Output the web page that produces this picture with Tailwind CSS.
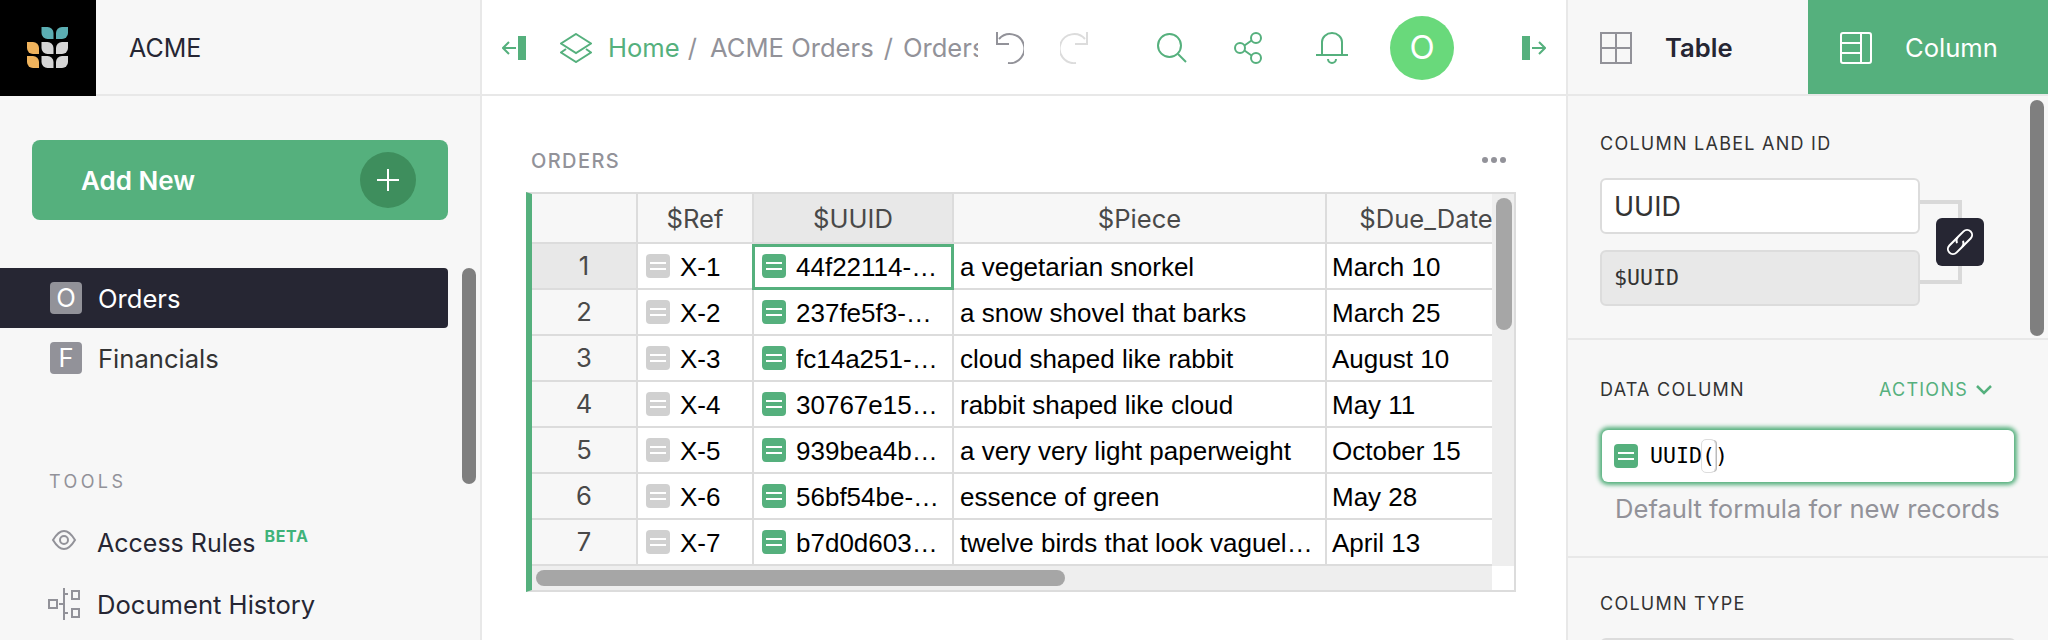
<!DOCTYPE html>
<html lang="en">
<head>
    <meta charset="UTF-8">
    <title>ACME Orders</title>
    <script src="https://cdn.jsdelivr.net/npm/@tailwindcss/browser@4"></script>
</head>
<body class="w-[2048px] h-[640px] overflow-hidden bg-white font-['Inter',sans-serif] text-[#262633]">

<svg class="hidden">
    <symbol id="eq" viewBox="0 0 24 24">
        <rect width="24" height="24" rx="4" fill="currentColor"/>
        <rect x="4" y="8" width="16" height="2" fill="#fff"/>
        <rect x="4" y="14" width="16" height="2" fill="#fff"/>
    </symbol>
</svg>

<div class="flex h-[640px]">

    <!-- left sidebar -->
    <aside class="relative w-[482px] shrink-0 bg-[#f7f7f7] border-r-2 border-[#e8e8e8] overflow-hidden">
        <div class="flex items-center h-[96px] border-b-2 border-[#e8e8e8]">
            <div class="flex items-center justify-center self-start w-[96px] h-[96px] bg-black shrink-0">
                <svg width="42" height="42" viewBox="0 0 42 42">
                    <path d="M14.500 0h6a6 6 0 0 1 6 6v6h-6a6 6 0 0 1-6-6z" fill="#5baeb3"/>
                    <path d="M41 0h-6a6 6 0 0 0-6 6v6h6a6 6 0 0 0 6-6z" fill="#5baeb3"/>
                    <path d="M0 15h6a6 6 0 0 1 6 6v6h-6a6 6 0 0 1-6-6z" fill="#f0b35c"/>
                    <path d="M0 29h6a6 6 0 0 1 6 6v6h-6a6 6 0 0 1-6-6z" fill="#f0b35c"/>
                    <path d="M14.500 15h6a6 6 0 0 1 6 6v6h-6a6 6 0 0 1-6-6z" fill="#d6d6d6"/>
                    <path d="M14.500 29h6a6 6 0 0 1 6 6v6h-6a6 6 0 0 1-6-6z" fill="#d6d6d6"/>
                    <path d="M41 15h-6a6 6 0 0 0-6 6v6h6a6 6 0 0 0 6-6z" fill="#d6d6d6"/>
                    <path d="M41 29h-6a6 6 0 0 0-6 6v6h6a6 6 0 0 0 6-6z" fill="#d6d6d6"/>
                </svg>
            </div>
            <span class="ml-[33px] mt-[4px] text-[25px]">ACME</span>
        </div>

        <div class="pt-[44px] pl-[32px]">
            <div class="flex items-center justify-between w-[416px] h-[80px] pl-[49px] pr-[32px] bg-[#55b07d] rounded-lg text-white">
                <span class="text-[26px] font-semibold">Add New</span>
                <span class="flex items-center justify-center w-[56px] h-[56px] rounded-full bg-[#3e8e5d]">
                    <svg width="24" height="24" viewBox="0 0 24 24" stroke="#fff" stroke-width="2"><path d="M12 1v22M1 12h22"/></svg>
                </span>
            </div>
        </div>

        <div class="mt-[48px]">
            <div class="flex items-center w-[448px] h-[60px] pl-[50px] bg-[#262633] rounded-r text-white">
                <span class="flex items-center justify-center w-[32px] h-[32px] rounded bg-[#929299] text-[25.6px]">O</span>
                <span class="ml-[16px] mt-[2px] text-[25.6px]">Orders</span>
            </div>
            <div class="flex items-center w-[448px] h-[60px] pl-[50px] text-[#333]">
                <span class="flex items-center justify-center w-[32px] h-[32px] rounded bg-[#929299] text-white text-[25.6px]">F</span>
                <span class="ml-[16px] mt-[2px] text-[25.6px]">Financials</span>
            </div>
        </div>

        <div class="mt-[83px] pl-[49px] text-[18px] leading-[22px] tracking-[3.4px] text-[#929299]">TOOLS</div>

        <div class="mt-[21px] pl-[48px]">
            <div class="flex items-center h-[60px]">
                <svg class="w-[32px] h-[32px] shrink-0 mb-[8px]" viewBox="0 0 32 32" fill="none" stroke="#929299" stroke-width="2">
                    <path d="M5 16c3-5 6.500-9 11-9s8 4 11 9c-3 5-6.500 9-11 9s-8-4-11-9z"/>
                    <circle cx="16" cy="16" r="4"/>
                </svg>
                <span class="ml-[17px] text-[25px]">Access Rules</span>
                <span class="ml-[9px] mb-[16px] text-[16px] font-bold tracking-[0.6px] text-[#3fb37a]">BETA</span>
            </div>
            <div class="flex items-center h-[60px]">
                <svg class="w-[32px] h-[32px] shrink-0" viewBox="0 0 32 32" fill="none" stroke="#929299" stroke-width="2">
                    <rect x="1" y="12" width="8" height="8"/>
                    <rect x="24" y="3" width="7" height="8"/>
                    <rect x="24" y="21" width="7" height="8"/>
                    <path d="M16 0v32M16 16h-5M16 6h4M16 25h4"/>
                </svg>
                <span class="ml-[17px] mt-[2px] text-[25.6px]">Document History</span>
            </div>
        </div>

        <!-- sidebar scrollbar -->
        <div class="absolute left-[462px] top-[268px] w-[14px] h-[216px] rounded-full bg-[#7f7f7f]"></div>
    </aside>

    <!-- main area -->
    <main class="w-[1086px] shrink-0 border-r-2 border-[#e8e8e8] overflow-hidden">
        <div class="flex items-center h-[96px] pt-[2px] border-b-2 border-[#e8e8e8]">
            <svg class="ml-[20px] shrink-0" width="24" height="24" viewBox="0 0 24 24" fill="none" stroke="#55b07d" stroke-width="2">
                <rect x="16" y="0" width="8" height="24" fill="#55b07d" stroke="none"/>
                <path d="M14 12H1M7 6l-6 6 6 6"/>
            </svg>
            <svg class="ml-[34px] shrink-0" width="32" height="30" viewBox="0 0 32 30" fill="none" stroke="#55b07d" stroke-width="2">
                <path d="M16 1 31 10.500 16 20 1 10.500z"/>
                <path d="M6 16 1 19.500 16 29 31 19.500 26 16"/>
            </svg>
            <div class="flex items-center w-[370px] ml-[16px] shrink-0 text-[25.6px] text-[#929299] whitespace-nowrap overflow-hidden">
                <span class="text-[#55b07d]">Home</span>
                <span class="ml-[8px]">/</span>
                <span class="ml-[13px]">ACME Orders</span>
                <span class="ml-[10px]">/</span>
                <span class="ml-[10px]">Orders</span>
            </div>
            <svg class="ml-[18px] shrink-0" width="28" height="32" viewBox="0 0 28 32" fill="none" stroke="#929299" stroke-width="2">
                <path d="M1 0v12h12"/>
                <path d="M3 7A14.500 14.500 0 1 1 12 31"/>
            </svg>
            <svg class="ml-[36px] shrink-0" width="28" height="32" viewBox="0 0 28 32" fill="none" stroke="#dcdcdc" stroke-width="2">
                <path d="M27 0v12H15"/>
                <path d="M25 7A14.500 14.500 0 1 0 16 31"/>
            </svg>
            <svg class="ml-[69px] shrink-0" width="30" height="30" viewBox="0 0 30 30" fill="none" stroke="#55b07d" stroke-width="2">
                <circle cx="12.500" cy="12.500" r="11.500"/>
                <path d="M21 21l8 8"/>
            </svg>
            <svg class="ml-[47px] shrink-0" width="28" height="32" viewBox="0 0 28 32" fill="none" stroke="#55b07d" stroke-width="2">
                <circle cx="22" cy="6" r="5"/>
                <circle cx="6" cy="16" r="5"/>
                <circle cx="22" cy="26" r="5"/>
                <path d="M10.500 13.500l7-5M10.500 18.500l7 5"/>
            </svg>
            <svg class="ml-[54px] shrink-0" width="32" height="32" viewBox="0 0 32 32" fill="none" stroke="#55b07d" stroke-width="2">
                <path d="M0 23h32M6 23V10a10 9 0 0 1 20 0v13"/>
                <path d="M12 27a4 4 0 0 0 8 0"/>
            </svg>
            <span class="flex items-center justify-center ml-[42px] shrink-0 w-[64px] h-[64px] rounded-full bg-[#69d97b] text-white text-[33px]">O</span>
            <svg class="ml-[68px] shrink-0" width="24" height="24" viewBox="0 0 24 24" fill="none" stroke="#55b07d" stroke-width="2">
                <rect x="0" y="0" width="8" height="24" fill="#55b07d" stroke="none"/>
                <path d="M10 12h13M17 6l6 6-6 6"/>
            </svg>
        </div>

        <div class="pl-[44px] pt-[52px]">
            <div class="flex justify-between items-center w-[980px] h-[24px] pl-[5px]">
                <span class="mt-[2px] text-[20px] tracking-[1.4px] text-[#929299] font-medium">ORDERS</span>
                <span class="flex gap-[3px]">
                    <i class="w-[6px] h-[6px] rounded-full bg-[#929299]"></i>
                    <i class="w-[6px] h-[6px] rounded-full bg-[#929299]"></i>
                    <i class="w-[6px] h-[6px] rounded-full bg-[#929299]"></i>
                </span>
            </div>

            <!-- orders grid -->
            <div class="w-[990px] h-[400px] mt-[20px] border-y-2 border-r-2 border-l-[6px] border-y-[#dcdcdc] border-r-[#dcdcdc] border-l-[#55b07d] text-[26px] text-black font-['Liberation_Sans',sans-serif]">
                <div class="flex h-[372px]">
                    <div class="grid grid-cols-[106px_116px_200px_373px_200px] grid-rows-[50px_repeat(7,46px)] w-[960px] overflow-hidden whitespace-nowrap">
                        <!-- header -->
                        <div class="bg-[#f7f7f7] border-r-2 border-b-2 border-[#dcdcdc]"></div>
                        <div class="flex items-center justify-center pt-[2px] bg-[#f7f7f7] border-r-2 border-b-2 border-[#dcdcdc] font-['Inter',sans-serif] text-[25.6px] text-[#494949]">$Ref</div>
                        <div class="flex items-center justify-center pt-[2px] bg-[#e8e8e8] border-r-2 border-b-2 border-[#dcdcdc] font-['Inter',sans-serif] text-[25.6px] text-[#494949]">$UUID</div>
                        <div class="flex items-center justify-center pt-[2px] bg-[#f7f7f7] border-r-2 border-b-2 border-[#dcdcdc] font-['Inter',sans-serif] text-[25.6px] text-[#494949]">$Piece</div>
                        <div class="flex items-center justify-center pt-[2px] bg-[#f7f7f7] border-r-2 border-b-2 border-[#dcdcdc] font-['Inter',sans-serif] text-[25.6px] text-[#494949]">$Due_Date</div>

                        <!-- row 1 -->
                        <div class="flex items-center justify-center bg-[#e8e8e8] border-r-2 border-b-2 border-[#dcdcdc] font-['Inter',sans-serif] text-[25.6px] text-[#494949]">1</div>
                        <div class="flex items-center pl-[8px] pt-[2px] border-r-2 border-b-2 border-[#dcdcdc]"><svg class="w-[24px] h-[24px] mb-[2px] mr-[10px] shrink-0 text-[#d0d0d0]"><use href="#eq"/></svg>X-1</div>
                        <div class="relative flex items-center pl-[8px] pt-[2px] border-r-2 border-b-2 border-[#dcdcdc]"><svg class="w-[24px] h-[24px] mb-[2px] mr-[10px] shrink-0 text-[#55b07d]"><use href="#eq"/></svg>44f22114-…<div class="absolute -left-[2px] top-0 -right-[2px] -bottom-[2px] border-[3px] border-[#55b07d]"></div></div>
                        <div class="flex items-center pl-[6px] pt-[2px] border-r-2 border-b-2 border-[#dcdcdc]">a vegetarian snorkel</div>
                        <div class="flex items-center pl-[5px] pt-[2px] border-r-2 border-b-2 border-[#dcdcdc]">March 10</div>

                        <!-- row 2 -->
                        <div class="flex items-center justify-center bg-[#f7f7f7] border-r-2 border-b-2 border-[#dcdcdc] font-['Inter',sans-serif] text-[25.6px] text-[#494949]">2</div>
                        <div class="flex items-center pl-[8px] pt-[2px] border-r-2 border-b-2 border-[#dcdcdc]"><svg class="w-[24px] h-[24px] mb-[2px] mr-[10px] shrink-0 text-[#d0d0d0]"><use href="#eq"/></svg>X-2</div>
                        <div class="flex items-center pl-[8px] pt-[2px] border-r-2 border-b-2 border-[#dcdcdc]"><svg class="w-[24px] h-[24px] mb-[2px] mr-[10px] shrink-0 text-[#55b07d]"><use href="#eq"/></svg>237fe5f3-…</div>
                        <div class="flex items-center pl-[6px] pt-[2px] border-r-2 border-b-2 border-[#dcdcdc]">a snow shovel that barks</div>
                        <div class="flex items-center pl-[5px] pt-[2px] border-r-2 border-b-2 border-[#dcdcdc]">March 25</div>

                        <!-- row 3 -->
                        <div class="flex items-center justify-center bg-[#f7f7f7] border-r-2 border-b-2 border-[#dcdcdc] font-['Inter',sans-serif] text-[25.6px] text-[#494949]">3</div>
                        <div class="flex items-center pl-[8px] pt-[2px] border-r-2 border-b-2 border-[#dcdcdc]"><svg class="w-[24px] h-[24px] mb-[2px] mr-[10px] shrink-0 text-[#d0d0d0]"><use href="#eq"/></svg>X-3</div>
                        <div class="flex items-center pl-[8px] pt-[2px] border-r-2 border-b-2 border-[#dcdcdc]"><svg class="w-[24px] h-[24px] mb-[2px] mr-[10px] shrink-0 text-[#55b07d]"><use href="#eq"/></svg>fc14a251-…</div>
                        <div class="flex items-center pl-[6px] pt-[2px] border-r-2 border-b-2 border-[#dcdcdc]">cloud shaped like rabbit</div>
                        <div class="flex items-center pl-[5px] pt-[2px] border-r-2 border-b-2 border-[#dcdcdc]">August 10</div>

                        <!-- row 4 -->
                        <div class="flex items-center justify-center bg-[#f7f7f7] border-r-2 border-b-2 border-[#dcdcdc] font-['Inter',sans-serif] text-[25.6px] text-[#494949]">4</div>
                        <div class="flex items-center pl-[8px] pt-[2px] border-r-2 border-b-2 border-[#dcdcdc]"><svg class="w-[24px] h-[24px] mb-[2px] mr-[10px] shrink-0 text-[#d0d0d0]"><use href="#eq"/></svg>X-4</div>
                        <div class="flex items-center pl-[8px] pt-[2px] border-r-2 border-b-2 border-[#dcdcdc]"><svg class="w-[24px] h-[24px] mb-[2px] mr-[10px] shrink-0 text-[#55b07d]"><use href="#eq"/></svg>30767e15…</div>
                        <div class="flex items-center pl-[6px] pt-[2px] border-r-2 border-b-2 border-[#dcdcdc]">rabbit shaped like cloud</div>
                        <div class="flex items-center pl-[5px] pt-[2px] border-r-2 border-b-2 border-[#dcdcdc]">May 11</div>

                        <!-- row 5 -->
                        <div class="flex items-center justify-center bg-[#f7f7f7] border-r-2 border-b-2 border-[#dcdcdc] font-['Inter',sans-serif] text-[25.6px] text-[#494949]">5</div>
                        <div class="flex items-center pl-[8px] pt-[2px] border-r-2 border-b-2 border-[#dcdcdc]"><svg class="w-[24px] h-[24px] mb-[2px] mr-[10px] shrink-0 text-[#d0d0d0]"><use href="#eq"/></svg>X-5</div>
                        <div class="flex items-center pl-[8px] pt-[2px] border-r-2 border-b-2 border-[#dcdcdc]"><svg class="w-[24px] h-[24px] mb-[2px] mr-[10px] shrink-0 text-[#55b07d]"><use href="#eq"/></svg>939bea4b…</div>
                        <div class="flex items-center pl-[6px] pt-[2px] border-r-2 border-b-2 border-[#dcdcdc]">a very very light paperweight</div>
                        <div class="flex items-center pl-[5px] pt-[2px] border-r-2 border-b-2 border-[#dcdcdc]">October 15</div>

                        <!-- row 6 -->
                        <div class="flex items-center justify-center bg-[#f7f7f7] border-r-2 border-b-2 border-[#dcdcdc] font-['Inter',sans-serif] text-[25.6px] text-[#494949]">6</div>
                        <div class="flex items-center pl-[8px] pt-[2px] border-r-2 border-b-2 border-[#dcdcdc]"><svg class="w-[24px] h-[24px] mb-[2px] mr-[10px] shrink-0 text-[#d0d0d0]"><use href="#eq"/></svg>X-6</div>
                        <div class="flex items-center pl-[8px] pt-[2px] border-r-2 border-b-2 border-[#dcdcdc]"><svg class="w-[24px] h-[24px] mb-[2px] mr-[10px] shrink-0 text-[#55b07d]"><use href="#eq"/></svg>56bf54be-…</div>
                        <div class="flex items-center pl-[6px] pt-[2px] border-r-2 border-b-2 border-[#dcdcdc]">essence of green</div>
                        <div class="flex items-center pl-[5px] pt-[2px] border-r-2 border-b-2 border-[#dcdcdc]">May 28</div>

                        <!-- row 7 -->
                        <div class="flex items-center justify-center bg-[#f7f7f7] border-r-2 border-b-2 border-[#dcdcdc] font-['Inter',sans-serif] text-[25.6px] text-[#494949]">7</div>
                        <div class="flex items-center pl-[8px] pt-[2px] border-r-2 border-b-2 border-[#dcdcdc]"><svg class="w-[24px] h-[24px] mb-[2px] mr-[10px] shrink-0 text-[#d0d0d0]"><use href="#eq"/></svg>X-7</div>
                        <div class="flex items-center pl-[8px] pt-[2px] border-r-2 border-b-2 border-[#dcdcdc]"><svg class="w-[24px] h-[24px] mb-[2px] mr-[10px] shrink-0 text-[#55b07d]"><use href="#eq"/></svg>b7d0d603…</div>
                        <div class="flex items-center pl-[6px] pt-[2px] border-r-2 border-b-2 border-[#dcdcdc]">twelve birds that look vaguel…</div>
                        <div class="flex items-center pl-[5px] pt-[2px] border-r-2 border-b-2 border-[#dcdcdc]">April 13</div>
                    </div>
                    <!-- vertical scrollbar -->
                    <div class="w-[22px] pl-[4px] pt-[4px] bg-[#eeeeee]">
                        <div class="w-[16px] h-[132px] rounded-full bg-[#a6a6a6]"></div>
                    </div>
                </div>
                <!-- horizontal scrollbar -->
                <div class="w-[960px] h-[24px] pl-[4px] pt-[4px] bg-[#eeeeee]">
                    <div class="w-[529px] h-[16px] rounded-full bg-[#a6a6a6]"></div>
                </div>
            </div>
        </div>
    </main>

    <!-- right panel -->
    <aside class="relative flex-1 bg-[#f7f7f7] overflow-hidden">
        <div class="flex h-[96px] border-b-2 border-[#e8e8e8]">
            <div class="flex items-center w-[240px] pl-[32px] pt-[2px]">
                <svg width="32" height="32" viewBox="0 0 32 32" fill="none" stroke="#929299" stroke-width="2"><path d="M1 1h30v30H1zM16 1v30M1 16h30"/></svg>
                <span class="ml-[33px] text-[25.6px] font-semibold">Table</span>
            </div>
            <div class="flex items-center w-[240px] pl-[32px] pt-[2px] bg-[#55b07d] text-white">
                <svg width="32" height="32" viewBox="0 0 32 32" fill="none" stroke="#fff" stroke-width="2"><rect x="1" y="1" width="30" height="30" rx="2"/><path d="M21 1v30M1 11h20M1 21h20"/></svg>
                <span class="ml-[33px] text-[25.6px]">Column</span>
            </div>
        </div>

        <div class="relative h-[244px] border-b-2 border-[#e8e8e8] pl-[32px]">
            <div class="pt-[36px] text-[18px] leading-[24px] tracking-[1.25px] text-[#333]">COLUMN LABEL AND ID</div>
            <div class="flex items-center w-[320px] h-[56px] mt-[22px] pl-[12px] pt-[2px] bg-white border-2 border-[#dcdcdc] rounded-md text-[27px] text-[#333]">UUID</div>
            <div class="flex items-center w-[320px] h-[56px] mt-[16px] pl-[12px] bg-[#e8e8e8] border-2 border-[#dcdcdc] rounded-md text-[21.6px] text-[#333] font-['DejaVu_Sans_Mono',monospace]">$UUID</div>
            <!-- connector between the two fields -->
            <div class="absolute left-[352px] top-[104px] w-[42px] h-[84px] border-y-4 border-r-4 border-[#d9d9d9]"></div>
            <span class="absolute left-[368px] top-[122px] flex items-center justify-center w-[48px] h-[48px] rounded-md bg-[#262633]">
                <svg class="-rotate-45" width="36" height="36" viewBox="0 0 36 36" fill="none" stroke="#fff" stroke-width="2" stroke-linecap="round">
                    <path d="M19 13H8a5 5 0 0 0 0 10h8a5 5 0 0 0 4.500-3"/>
                    <path d="M17 23h11a5 5 0 0 0 0-10h-8a5 5 0 0 0-4.500 3"/>
                </svg>
            </span>
        </div>

        <div class="h-[218px] border-b-2 border-[#e8e8e8] px-[32px]">
            <div class="flex items-center justify-between pt-[38px] pr-[24px] text-[18px] leading-[24px] tracking-[1.25px] text-[#333]">
                <span>DATA COLUMN</span>
                <span class="flex items-center text-[#55b07d]">ACTIONS
                    <svg class="ml-[8px]" width="16" height="12" viewBox="0 0 16 12" fill="none" stroke="#55b07d" stroke-width="2.500"><path d="M1 2l7 7 7-7"/></svg>
                </span>
            </div>
            <div class="flex items-center w-[412px] h-[52px] mt-[28px] ml-[2px] pl-[12px] bg-white rounded-md shadow-[0_0_4px_3px_#55b07d] text-[21.6px] text-black font-['DejaVu_Sans_Mono',monospace]">
                <svg class="w-[24px] h-[24px] mr-[12px] text-[#55b07d]"><use href="#eq"/></svg>UUID<span class="rounded-sm outline outline-[#dddddd] shadow-[2px_0_0_#bbbbbb]">(</span>)
            </div>
            <div class="mt-[11px] ml-[15px] text-[25.6px] leading-[32px] text-[#929299]">Default formula for new records</div>
        </div>

        <div class="px-[32px]">
            <div class="pt-[34px] text-[18px] leading-[24px] tracking-[1.25px] text-[#333]">COLUMN TYPE</div>
            <div class="h-[40px] mt-[22px] bg-white border-2 border-[#dcdcdc] rounded-md"></div>
        </div>

        <!-- panel scrollbar -->
        <div class="absolute left-[462px] top-[100px] w-[14px] h-[236px] rounded-full bg-[#7f7f7f]"></div>
    </aside>
</div>
</body>
</html>
